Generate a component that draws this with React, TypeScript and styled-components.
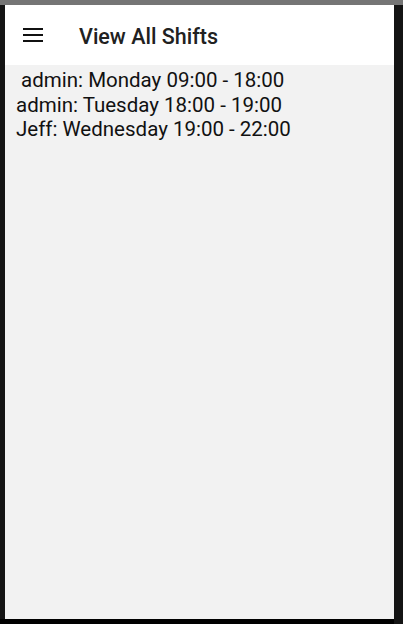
import React from "react";
import styled, { createGlobalStyle } from "styled-components";

const Global = createGlobalStyle`
  html, body { margin: 0; padding: 0; background: #141414; }
  body { font-family: Roboto, "Noto Sans", sans-serif; }
`;

const Frame = styled.div`
  width: 403px;
  height: 624px;
  box-sizing: border-box;
  padding: 0 9px 5px 5px;
  background: #141414;
  display: flex;
  flex-direction: column;
  position: relative;
`;

const StatusBar = styled.div`
  height: 5px;
  background: #757575;
  margin-right: -9px;
  margin-left: -5px;
  flex: none;
`;

const Screen = styled.div`
  flex: 1;
  display: flex;
  flex-direction: column;
  background: #f2f2f2;
`;

const BottomBar = styled.div`
  position: absolute;
  left: 0;
  right: 9px;
  bottom: 0;
  height: 5px;
  background: #000;
`;

const Toolbar = styled.div`
  height: 60px;
  background: #fff;
  display: flex;
  align-items: center;
  flex: none;
`;

const MenuButton = styled.div`
  width: 56px;
  height: 56px;
  display: flex;
  align-items: center;
  justify-content: center;
`;

const Title = styled.div`
  margin-left: 18px;
  font-size: 21.5px;
  font-weight: 500;
  color: #212121;
  padding-top: 2px;
`;

const List = styled.div`
  padding: 3px 0 0 11px;
  display: flex;
  flex-direction: column;
`;

const Row = styled.div`
  font-size: 20.5px;
  line-height: 24.5px;
  color: #111;
  white-space: pre;
`;

const shifts = [
  " admin: Monday 09:00 - 18:00",
  "admin: Tuesday 18:00 - 19:00",
  "Jeff: Wednesday 19:00 - 22:00",
];

export default function App() {
  return (
    <>
      <Global />
      <Frame>
        <StatusBar />
        <Screen>
          <Toolbar>
            <MenuButton>
              <svg width="22" height="14" viewBox="0 0 22 14">
                <rect x="1" y="0" width="20" height="2" fill="#111" />
                <rect x="1" y="6" width="20" height="2" fill="#111" />
                <rect x="1" y="12" width="20" height="2" fill="#111" />
              </svg>
            </MenuButton>
            <Title>View All Shifts</Title>
          </Toolbar>
          <List>
            {shifts.map((s) => (
              <Row key={s}>{s}</Row>
            ))}
          </List>
        </Screen>
        <BottomBar />
      </Frame>
    </>
  );
}
